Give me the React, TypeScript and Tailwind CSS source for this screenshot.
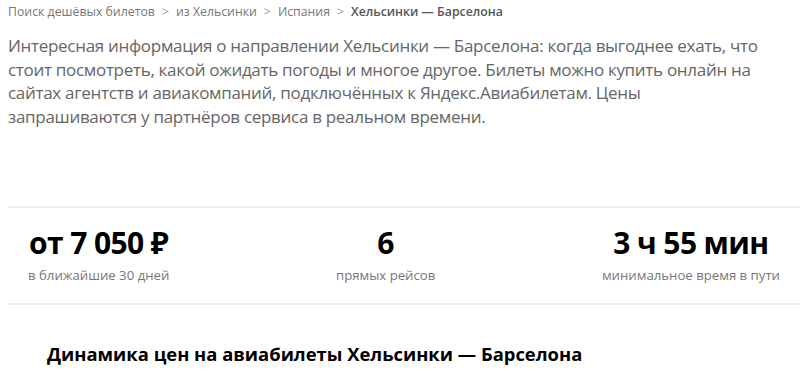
const crumbs = ["Поиск дешёвых билетов", "из Хельсинки", "Испания"];

const lines = [
  "Интересная информация о направлении Хельсинки — Барселона: когда выгоднее ехать, что",
  "стоит посмотреть, какой ожидать погоды и многое другое. Билеты можно купить онлайн на",
  "сайтах агентств и авиакомпаний, подключённых к Яндекс.Авиабилетам. Цены",
  "запрашиваются у партнёров сервиса в реальном времени.",
];

const stats = [
  { value: "от 7 050 ₽", label: "в ближайшие 30 дней" },
  { value: "6", label: "прямых рейсов" },
  { value: "3 ч 55 мин", label: "минимальное время в пути" },
];

export default function App() {
  return (
    <main
      className="min-h-[371px] bg-white pl-2 text-[#000]"
      style={{ fontFamily: '"Open Sans", "Noto Sans", sans-serif' }}
    >
      <nav className="flex items-center pt-[3px] text-[12.3px] leading-[18px] text-[#777]">
        {crumbs.map((c) => (
          <span key={c} className="flex items-center">
            <span>{c}</span>
            <span className="px-[7px] text-[#999]">&gt;</span>
          </span>
        ))}
        <span className="font-semibold text-[#555]">Хельсинки — Барселона</span>
      </nav>

      <p className="mt-[13px] text-[17px] leading-[23.5px] tracking-[-0.3px] whitespace-nowrap text-[#666]">
        {lines.map((l) => (
          <span key={l} className="block">
            {l}
          </span>
        ))}
      </p>

      <section className="mt-[78px] flex justify-between border-y-2 border-[#ececec] px-5 pt-[16px] pb-[18px]">
        {stats.map((s) => (
          <div key={s.label} className="flex flex-col items-center">
            <span className="text-[30px] leading-[38px] font-bold tracking-[-0.6px]">
              {s.value}
            </span>
            <span className="mt-[3px] text-[13.2px] leading-[20px] text-[#777]">{s.label}</span>
          </div>
        ))}
      </section>

      <h2 className="mt-[37px] pl-[39px] text-[18.4px] leading-[24px] font-bold">
        Динамика цен на авиабилеты Хельсинки — Барселона
      </h2>
    </main>
  );
}
